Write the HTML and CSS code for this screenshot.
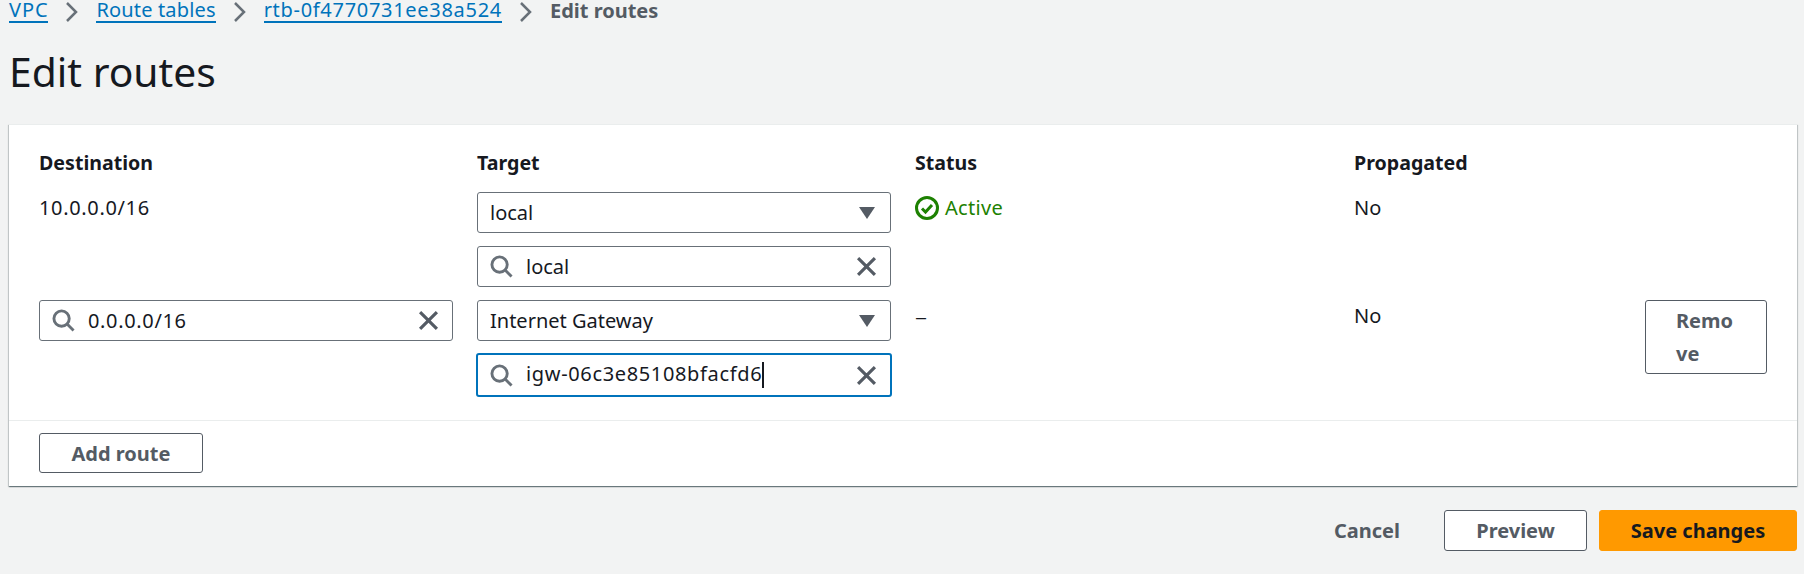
FILE: index.html
```html
<!DOCTYPE html>
<html lang="en">
<head>
  <meta charset="UTF-8" />
  <title>Edit routes</title>
  <link rel="stylesheet" href="styles.css">
</head>
<body>
  <nav class="crumbs">
    <a href="#" class="vpc">VPC</a>
    <svg class="chev" viewBox="0 0 16 24"><path d="M3 3l9 9-9 9"/></svg>
    <a href="#">Route tables</a>
    <svg class="chev" viewBox="0 0 16 24"><path d="M3 3l9 9-9 9"/></svg>
    <a href="#" class="num">rtb-0f4770731ee38a524</a>
    <svg class="chev" viewBox="0 0 16 24"><path d="M3 3l9 9-9 9"/></svg>
    <span class="current">Edit routes</span>
  </nav>

  <h1>Edit routes</h1>

  <section class="card">
    <div class="routes">
      <div class="head">Destination</div>
      <div class="head">Target</div>
      <div class="head">Status</div>
      <div class="head">Propagated</div>
      <div></div>

      <!-- local route -->
      <div class="cell num">10.0.0.0/16</div>
      <div class="stack">
        <div class="field">
          <span class="val">local</span>
          <svg class="caret" viewBox="0 0 16 12"><path d="M0 0h16L8 12z"/></svg>
        </div>
        <div class="field">
          <svg class="search" viewBox="0 0 24 24"><circle cx="10" cy="10" r="8"/><path d="M16 16l6.500 6.500"/></svg>
          <span class="val">local</span>
          <svg class="clear" viewBox="0 0 20 20"><path d="M2 2l16 16M18 2L2 18"/></svg>
        </div>
      </div>
      <div class="cell status-ok">
        <svg class="check" viewBox="0 0 24 24"><circle cx="12" cy="12" r="10.500"/><path d="M7 12.500l3.500 3.500 6.500-7"/></svg>
        Active
      </div>
      <div class="cell">No</div>
      <div></div>

      <!-- igw route -->
      <div class="field">
        <svg class="search" viewBox="0 0 24 24"><circle cx="10" cy="10" r="8"/><path d="M16 16l6.500 6.500"/></svg>
        <span class="val num">0.0.0.0/16</span>
        <svg class="clear" viewBox="0 0 20 20"><path d="M2 2l16 16M18 2L2 18"/></svg>
      </div>
      <div class="stack">
        <div class="field">
          <span class="val">Internet Gateway</span>
          <svg class="caret" viewBox="0 0 16 12"><path d="M0 0h16L8 12z"/></svg>
        </div>
        <div class="field focused">
          <svg class="search" viewBox="0 0 24 24"><circle cx="10" cy="10" r="8"/><path d="M16 16l6.500 6.500"/></svg>
          <span class="val num">igw-06c3e85108bfacfd6<span class="cursor"></span></span>
          <svg class="clear" viewBox="0 0 20 20"><path d="M2 2l16 16M18 2L2 18"/></svg>
        </div>
      </div>
      <div class="cell dash">–</div>
      <div class="cell">No</div>
      <button class="btn remove">Remove</button>
    </div>

    <div class="card-foot">
      <button class="btn add">Add route</button>
    </div>
  </section>

  <div class="actions">
    <button class="btn link">Cancel</button>
    <button class="btn preview">Preview</button>
    <button class="btn primary">Save changes</button>
  </div>
</body>
</html>
```

FILE: styles.css
```css
body {
  margin: 0;
  padding: 0 7px 0 9px;
  font-family: "Noto Sans", sans-serif;
  font-size: 20px;
  line-height: 24px;
  background-color: #f2f3f3;
  color: #16191f;
}

.num {
  letter-spacing: 0.65px;
}

.crumbs {
  display: flex;
  align-items: center;
  height: 23px;
  line-height: 20px;
  letter-spacing: 0.15px;
}

.crumbs a {
  color: #0073bb;
  text-decoration: none;
  border-bottom: 2px solid #0073bb;
  height: 21px;
}

.crumbs a.vpc {
  letter-spacing: 0.9px;
}

.crumbs a.num {
  letter-spacing: 0.7px;
}

.chev {
  flex: none;
  width: 16px;
  height: 24px;
  margin: 0 16px;
  fill: none;
  stroke: #687078;
  stroke-width: 2.5;
}

.current {
  color: #545b64;
  font-weight: 700;
  margin-bottom: 2px;
  letter-spacing: 0;
}

h1 {
  margin: 25px 0 30px;
  font-size: 40.800px;
  line-height: 46px;
  font-weight: 400;
}

.card {
  background-color: #fff;
  border-top: 1px solid #eaeded;
  box-shadow: 0 1px 1px 0 rgba(0, 28, 36, 0.4), 1px 1px 1px 0 rgba(0, 28, 36, 0.15), -1px 1px 1px 0 rgba(0, 28, 36, 0.15);
}

.routes {
  display: grid;
  grid-template-columns: 414px 414px 415px 267px 122px;
  column-gap: 24px;
  row-gap: 13px;
  padding: 26px 30px 23px;
  align-items: start;
}

.head {
  font-weight: 700;
  font-size: 19.6px;
  margin-bottom: 4px;
}

.cell {
  padding-top: 4px;
}

.status-ok {
  display: flex;
  align-items: center;
  gap: 6px;
  color: #1d8102;
  letter-spacing: 0.3px;
}

.dash {
  font-size: 24px;
  font-weight: 300;
}

.check {
  flex: none;
  width: 24px;
  height: 24px;
  margin-top: -1px;
  fill: none;
  stroke: #1d8102;
  stroke-width: 3;
}

.stack {
  display: flex;
  flex-direction: column;
  gap: 13px;
}

.field {
  display: flex;
  align-items: center;
  height: 41px;
  box-sizing: border-box;
  padding: 0 13px 0 12px;
  background-color: #fff;
  border: 1px solid #687078;
  border-radius: 3px;
}

.field.focused {
  height: 44px;
  margin: -1px -1px 0;
  border: 2px solid #0073bb;
}

.val {
  flex: 1;
  white-space: nowrap;
}

.cursor {
  display: inline-block;
  width: 2px;
  height: 26px;
  background-color: #16191f;
  vertical-align: -7px;
}

.search {
  width: 23px;
  height: 23px;
  margin-right: 13px;
  fill: none;
  stroke: #687078;
  stroke-width: 3;
}

.clear {
  width: 21px;
  height: 21px;
  fill: none;
  stroke: #545b64;
  stroke-width: 3;
}

.caret {
  width: 16px;
  height: 12px;
  margin-right: 2px;
  fill: #545b64;
}

.btn {
  font-family: inherit;
  font-size: 20px;
  font-weight: 700;
  color: #545b64;
  background-color: #fff;
  border: 1px solid #545b64;
  border-radius: 3px;
  cursor: pointer;
}

.remove {
  width: 122px;
  padding: 0 30px;
  line-height: 33px;
  text-align: left;
  word-break: break-all;
  height: 74px;
}

.card-foot {
  padding: 12px 30px 13px;
  border-top: 1px solid #eaeded;
  display: flex;
}

.add {
  width: 164px;
  height: 40px;
  padding: 0;
}

.actions {
  display: flex;
  justify-content: flex-end;
  align-items: center;
  margin-top: 24px;
  gap: 12px;
}

.link {
  border: none;
  background: none;
  padding: 0;
  margin-right: 32px;
}

.preview {
  width: 143px;
  height: 41px;
  padding: 0;
}

.primary {
  width: 198px;
  height: 41px;
  padding: 0;
  color: #16191f;
  background-color: #ff9900;
  border-color: #ff9900;
}
```
